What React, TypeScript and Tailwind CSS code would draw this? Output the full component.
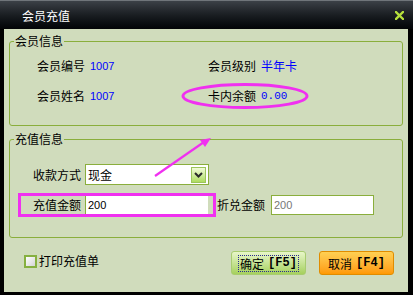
import React from 'react';

const cjk = "font-['Noto_Sans_CJK_SC','Noto_Sans',sans-serif]";
const mono = "font-['Liberation_Mono',monospace]";
const latin = "font-['Liberation_Sans',Arial,sans-serif]";

const InfoRow: React.FC<{ label: string; value: string; valueClass?: string }> = ({ label, value, valueClass }) => (
  <div className="flex items-center h-[30px]">
    <span className="w-[48px] text-[12px] leading-[16px] text-black">{label}</span>
    <span className={`ml-[5px] text-[#0000ff] ${valueClass ?? ''}`}>{value}</span>
  </div>
);

const App: React.FC = () => {
  return (
    <div className={`relative w-[413px] h-[295px] flex flex-col bg-black ${cjk}`}>
      {/* title bar */}
      <div className="h-[29px] flex items-center justify-between pl-[22px] pr-[9px] border-t border-[#70757a] bg-gradient-to-b from-[#3c4147] via-[#1a1e22] to-[#030507]">
        <span className="text-white text-[12px] leading-[14px] pt-[1px]">会员充值</span>
        <svg width="9" height="9" viewBox="0 0 9 9">
          <path d="M1 1 L8 8 M8 1 L1 8" stroke="#b6e03c" strokeWidth="2.4" strokeLinecap="square" />
        </svg>
      </div>

      {/* body */}
      <div className="flex-1 ml-[4px] mr-[5px] mb-[3px] bg-[#d0dcbc] flex flex-col">
        <fieldset className="mt-[4px] mx-[5px] h-[93px] border border-[#8aae3c] rounded-[3px]">
          <legend className="ml-[4px] px-[1px] text-[12px] leading-[16px] text-black">会员信息</legend>
          <div className="grid grid-cols-[171px_1fr] pl-[27px] mt-[2px]">
            <InfoRow label="会员编号" value="1007" valueClass={`${latin} text-[11px]`} />
            <InfoRow label="会员级别" value="半年卡" valueClass="text-[12px] leading-[16px]" />
            <InfoRow label="会员姓名" value="1007" valueClass={`${latin} text-[11px]`} />
            <InfoRow label="卡内余额" value="0.00" valueClass={`${mono} text-[11px]`} />
          </div>
        </fieldset>

        <fieldset className="mt-[5px] mx-[5px] h-[107px] border border-[#8aae3c] rounded-[3px]">
          <legend className="ml-[4px] px-[1px] text-[12px] leading-[16px] text-black">充值信息</legend>
          <div className="flex items-center mt-[17px] pl-[23px]">
            <span className="w-[48px] text-[12px] leading-[16px]">收款方式</span>
            <div className="ml-[4px] w-[124px] h-[21px] bg-white border border-[#8aae3c] flex items-center justify-between pl-[2px] pr-[2px]">
              <span className="text-[12px] leading-[16px]">现金</span>
              <div className="w-[15px] h-[16px] border border-[#9cc45c] bg-gradient-to-b from-[#f2fbd8] to-[#aedc5c] flex items-center justify-center">
                <svg width="9" height="6" viewBox="0 0 9 6">
                  <path d="M1 1 L4.5 4.5 L8 1" stroke="#2a2a2a" strokeWidth="2" fill="none" />
                </svg>
              </div>
            </div>
          </div>
          <div className="flex items-center mt-[8px]">
            <div className="ml-[8px] h-[24px] border-[3px] border-[#f030f0] flex items-center pl-[12px] pr-[5px]">
              <span className="w-[48px] text-[12px] leading-[16px]">充值金额</span>
              <div className={`ml-[4px] w-[123px] h-[18px] bg-white border-l border-[#8aae3c] flex items-center pl-[2px] ${latin} text-[11px] text-black`}>
                200
              </div>
            </div>
            <span className="ml-[1px] w-[48px] text-[12px] leading-[16px]">折兑金额</span>
            <div className={`ml-[6px] w-[103px] h-[20px] bg-white border border-[#8aae3c] flex items-center pl-[2px] ${latin} text-[11px] text-[#777]`}>
              200
            </div>
          </div>
        </fieldset>

        <div className="mt-[13px] flex items-center justify-between pl-[20px] pr-[14px]">
          <label className="flex items-center mt-[-4px]">
            <span className="w-[13px] h-[13px] border-2 border-[#86b040] bg-gradient-to-br from-white to-[#d4d4d4]" />
            <span className="ml-[2px] text-[12px] leading-[16px]">打印充值单</span>
          </label>
          <div className="flex gap-[13px]">
            <button className="w-[75px] h-[24px] rounded-[3px] border border-[#a8cc70] bg-gradient-to-b from-[#e8f6c8] to-[#a6d05c] flex items-center justify-center">
              <span className="flex items-center border border-dotted border-[#2a2a90] px-[1px] h-[17px] text-[12px] leading-[15px] text-black">
                确定<span className={`${mono} text-[12px] font-bold ml-[4px]`}>[F5]</span>
              </span>
            </button>
            <button className="w-[75px] h-[24px] rounded-[3px] border border-[#e08c00] bg-gradient-to-b from-[#ffd052] to-[#ff9a00] flex items-center justify-center text-[12px] leading-[15px] text-black">
              取消<span className={`${mono} text-[12px] font-bold ml-[4px]`}>[F4]</span>
            </button>
          </div>
        </div>
      </div>

      {/* annotations */}
      <svg className="absolute left-[180px] top-[81px] pointer-events-none" width="130" height="30" viewBox="0 0 130 30">
        <ellipse cx="65" cy="15" rx="62" ry="11.5" fill="none" stroke="#f030f0" strokeWidth="3" />
      </svg>
      <svg className="absolute left-[150px] top-[132px] pointer-events-none" width="66" height="50" viewBox="0 0 66 50">
        <line x1="5" y1="44" x2="54" y2="10" stroke="#f030f0" strokeWidth="2.2" />
        <polygon points="61,6 55,15 50,8" fill="#f030f0" />
      </svg>
    </div>
  );
};

export default App;
